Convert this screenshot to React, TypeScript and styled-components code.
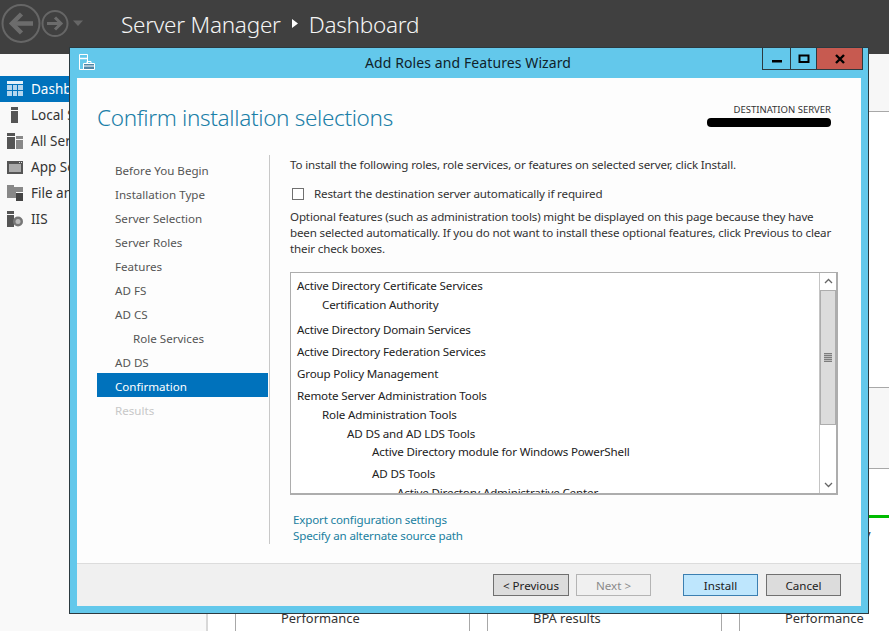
import React from "react";
import styled, { createGlobalStyle } from "styled-components";

const Global = createGlobalStyle`
  html, body { margin: 0; padding: 0; width: 889px; height: 631px; overflow: hidden; background: #fff; }
  * { box-sizing: border-box; }
  body { font-family: "Noto Sans", "Open Sans", sans-serif; font-size: 11.6px; color: #222; }
`;

const Page = styled.div`
  position: relative;
  width: 889px;
  height: 631px;
  overflow: hidden;
  display: flex;
  flex-direction: column;
`;

const Header = styled.header`
  height: 54px;
  flex: none;
  background: #404040;
  display: flex;
  align-items: center;
  color: #f4f4f4;
  font-size: 22.5px;
  letter-spacing: -0.25px;
  padding-bottom: 5px;
`;
const NavIcons = styled.svg`
  width: 121px;
  height: 46px;
  flex: none;
`;
const Crumb = styled.span`
  font-weight: 300;
`;
const CrumbArrow = styled.svg`
  width: 6px;
  height: 9px;
  margin: 0 11px 3px 11px;
`;

const Body = styled.div`
  flex: 1;
  min-height: 0;
  display: flex;
`;
const Sidebar = styled.nav`
  width: 208px;
  flex: none;
  background: #f9f9f9;
  border-right: 2px solid #d8d8d8;
  padding-top: 22px;
`;
const SideItem = styled.div<{ $active?: boolean }>`
  height: 26px;
  display: flex;
  align-items: center;
  gap: 8px;
  padding-left: 7px;
  font-size: 13.5px;
  white-space: nowrap;
  color: ${(p) => (p.$active ? "#fff" : "#333")};
  background: ${(p) => (p.$active ? "#0072bc" : "transparent")};
`;
const SideIcon = styled.svg`
  width: 16px;
  height: 16px;
  flex: none;
`;
const Main = styled.main`
  flex: 1;
  min-width: 0;
  display: flex;
  flex-direction: column;
  background: #fff;
`;
const WelcomeBand = styled.div`
  height: 58px;
  flex: none;
  background: #f7f7f7;
  border-bottom: 1px solid #a8a8a8;
`;
const QuickStart = styled.div`
  height: 276px;
  flex: none;
  border-bottom: 1px solid #a8a8a8;
`;
const RolesBand = styled.div`
  height: 81px;
  flex: none;
  background: #f7f7f7;
  border-bottom: 1px solid #a8a8a8;
`;
const Tiles = styled.div`
  flex: 1;
  display: flex;
  gap: 17px;
  padding-left: 27px;
`;
const Tile = styled.div`
  width: 235px;
  flex: none;
  border-left: 1px solid #a8a8a8;
  border-right: 1px solid #a8a8a8;
  padding: 46px 0 0 45px;
`;
const TileBar = styled.div`
  height: 3px;
  width: 233px;
  margin-left: -45px;
  background: #00bb00;
  margin-bottom: 6px;
`;
const TileRow = styled.div`
  height: 21px;
  line-height: 21px;
  font-size: 12.9px;
  white-space: nowrap;
  color: #333;
`;

const Dialog = styled.section`
  position: absolute;
  left: 69px;
  top: 47px;
  width: 800px;
  height: 567px;
  background: #63c8eb;
  border: 1px solid #2c3a40;
  display: flex;
  flex-direction: column;
  padding: 0 7px 7px 7px;
`;
const TitleBar = styled.div`
  position: relative;
  height: 30px;
  flex: none;
  display: flex;
  align-items: center;
  justify-content: center;
  font-size: 14px;
  letter-spacing: 0.1px;
  color: #10222a;
  padding: 0 2px 1px 0;
`;
const AppIcon = styled.svg`
  position: absolute;
  left: 2px;
  top: 6px;
  width: 16px;
  height: 16px;
`;
const WinButtons = styled.div`
  position: absolute;
  right: -2px;
  top: 0;
  height: 22px;
  display: flex;
  border: 1px solid #2c3a40;
  border-top: 0;
`;
const WinButton = styled.div<{ $w: number; $close?: boolean }>`
  width: ${(p) => p.$w}px;
  background: ${(p) => (p.$close ? "#c75a50" : "transparent")};
  display: flex;
  align-items: center;
  justify-content: center;
  & + & { border-left: 1px solid #2c3a40; }
`;
const WinGlyph = styled.svg`
  width: 14px;
  height: 12px;
`;

const Panel = styled.div`
  flex: 1;
  min-height: 0;
  background: #fdfdfd;
  display: flex;
  flex-direction: column;
`;
const PanelTop = styled.div`
  height: 77px;
  flex: none;
  display: flex;
  justify-content: space-between;
  padding: 25px 30px 0 20px;
`;
const Heading = styled.h1`
  margin: 0;
  font-size: 22.5px;
  line-height: 30px;
  font-weight: 300;
  color: #1b80a8;
  letter-spacing: -0.33px;
`;
const Dest = styled.div`
  display: flex;
  flex-direction: column;
  align-items: flex-end;
`;
const DestLabel = styled.div`
  font-size: 9.5px;
  line-height: 14px;
  color: #333;
`;
const Redaction = styled.div`
  width: 124px;
  height: 9px;
  margin-top: 1px;
  border-radius: 4px;
  background: #000;
`;
const Columns = styled.div`
  height: 389px;
  flex: none;
  display: flex;
  padding: 0 0 0 20px;
`;
const Steps = styled.div`
  width: 173px;
  flex: none;
  border-right: 1px solid #c8c8c8;
  padding: 2px 1px 0 0;
`;
const Step = styled.div<{ $indent?: boolean; $active?: boolean; $off?: boolean }>`
  height: 24px;
  line-height: 27px;
  padding-left: ${(p) => (p.$indent ? 36 : 18)}px;
  color: ${(p) => (p.$active ? "#fff" : p.$off ? "#c8c8c8" : "#555")};
  background: ${(p) => (p.$active ? "#0072bc" : "transparent")};
`;
const Content = styled.div`
  flex: 1;
  min-width: 0;
  padding: 2px 23px 0 20px;
  display: flex;
  flex-direction: column;
  letter-spacing: -0.16px;
`;
const Text = styled.p`
  margin: 0;
  line-height: 16px;
  color: #333;
`;
const CheckRow = styled.label`
  display: flex;
  align-items: center;
  height: 16px;
  margin: 13px 0 7px 2px;
  gap: 10px;
  color: #333;
`;
const Check = styled.span`
  width: 12px;
  height: 12px;
  border: 1px solid #707070;
  background: #fff;
  flex: none;
`;
const ListBox = styled.div`
  height: 224px;
  margin-top: 15px;
  border: 1px solid #adadad;
  border-width: 1px 2px 2px 1px;
  background: #fff;
  display: flex;
  overflow: hidden;
`;
const ListBody = styled.div`
  flex: 1;
  min-width: 0;
  padding: 3px 0 0 6px;
  overflow: hidden;
`;
const ListRow = styled.div<{ $level: number; $mt: number }>`
  line-height: 19px;
  height: 19px;
  white-space: nowrap;
  color: #222;
  margin-left: ${(p) => p.$level * 25}px;
  margin-top: ${(p) => p.$mt}px;
`;
const Scroll = styled.div`
  width: 17px;
  flex: none;
  border-left: 1px solid #c4c4c4;
  display: flex;
  flex-direction: column;
`;
const ScrollBtn = styled.div`
  height: 17px;
  flex: none;
  display: flex;
  align-items: center;
  justify-content: center;
  background: #fff;
`;
const Chevron = styled.svg`
  width: 9px;
  height: 6px;
`;
const Thumb = styled.div`
  height: 135px;
  flex: none;
  background: #dcdcdc;
  border: 1px solid #adadad;
  display: flex;
  align-items: center;
  justify-content: center;
`;
const Grip = styled.div`
  width: 8px;
  height: 9px;
  background: repeating-linear-gradient(#7d7d7d 0 1px, #bdbdbd 1px 2px);
`;
const ScrollTrack = styled.div`
  flex: 1;
  background: #fff;
`;
const Links = styled.div`
  margin: 17px 0 0 3px;
  display: flex;
  flex-direction: column;
`;
const LinkA = styled.a`
  line-height: 16px;
  color: #1a7fa0;
`;
const Footer = styled.div`
  flex: 1;
  margin-top: 19px;
  background: #f0f0f0;
  border-top: 1px solid #dcdcdc;
  display: flex;
  align-items: center;
  padding: 0 20px 0 416px;
`;
const Btn = styled.div<{ $kind?: "off" | "primary"; $w: number; $ml: number }>`
  width: ${(p) => p.$w}px;
  margin-left: ${(p) => p.$ml}px;
  height: 22px;
  display: flex;
  align-items: center;
  justify-content: center;
  border: 1px solid ${(p) => (p.$kind === "off" ? "#b4b4b4" : p.$kind === "primary" ? "#3c7fb1" : "#707070")};
  background: ${(p) => (p.$kind === "off" ? "#f0f0f0" : p.$kind === "primary" ? "#bee6fd" : "#dcdcdc")};
  color: ${(p) => (p.$kind === "off" ? "#8a8a8a" : "#222")};
`;

const steps: { t: string; indent?: boolean; active?: boolean; off?: boolean }[] = [
  { t: "Before You Begin" },
  { t: "Installation Type" },
  { t: "Server Selection" },
  { t: "Server Roles" },
  { t: "Features" },
  { t: "AD FS" },
  { t: "AD CS" },
  { t: "Role Services", indent: true },
  { t: "AD DS" },
  { t: "Confirmation", active: true },
  { t: "Results", off: true },
];

const rows: { t: string; l: number; m: number }[] = [
  { t: "Active Directory Certificate Services", l: 0, m: 0 },
  { t: "Certification Authority", l: 1, m: 0 },
  { t: "Active Directory Domain Services", l: 0, m: 6 },
  { t: "Active Directory Federation Services", l: 0, m: 3 },
  { t: "Group Policy Management", l: 0, m: 3 },
  { t: "Remote Server Administration Tools", l: 0, m: 3 },
  { t: "Role Administration Tools", l: 1, m: 0 },
  { t: "AD DS and AD LDS Tools", l: 2, m: 0 },
  { t: "Active Directory module for Windows PowerShell", l: 3, m: -1 },
  { t: "AD DS Tools", l: 3, m: 3 },
  { t: "Active Directory Administrative Center", l: 4, m: 0 },
];

export default function App() {
  return (
    <Page>
      <Global />
      <Header>
        <NavIcons viewBox="0 0 121 46">
          <g fill="none" stroke="#666" strokeWidth="2">
            <circle cx="21" cy="21.5" r="18.5" />
            <circle cx="55" cy="21.5" r="12.5" />
          </g>
          <g fill="none" stroke="#6c6c6c" strokeWidth="4.5">
            <path d="M12 21.5H33" />
            <path d="M21.5 12L12 21.5L21.5 31" />
          </g>
          <g fill="none" stroke="#6c6c6c" strokeWidth="3">
            <path d="M47 21.5H60" />
            <path d="M55 15.5L61 21.5L55 27.5" />
          </g>
          <path d="M73 18.5H83L78 24Z" fill="#666" />
        </NavIcons>
        <Crumb>Server Manager</Crumb>
        <CrumbArrow viewBox="0 0 6 9"><path d="M0 0 L6 4.5 L0 9 Z" fill="#fff" /></CrumbArrow>
        <Crumb>Dashboard</Crumb>
      </Header>
      <Body>
        <Sidebar>
          <SideItem $active>
            <SideIcon viewBox="0 0 16 16"><path d="M0 0H16V3H0Z" fill="#e4f1fa" /><path d="M0 4H5V9H0Z M6 4H10V9H6Z M11 4H16V9H11Z M0 10H5V15H0Z M6 10H10V15H6Z M11 10H16V15H11Z" fill="#b5d6ee" /></SideIcon>
            Dashboard
          </SideItem>
          <SideItem>
            <SideIcon viewBox="0 0 16 16"><path d="M4 0H11V3H4Z M4 4H11V16H4Z" fill="#555" /></SideIcon>
            Local Server
          </SideItem>
          <SideItem>
            <SideIcon viewBox="0 0 16 16"><path d="M0 0H8V3H0Z M0 4H8V16H0Z" fill="#555" /><path d="M9 3H16V6H9Z M9 7H16V16H9Z" fill="#888" /></SideIcon>
            All Servers
          </SideItem>
          <SideItem>
            <SideIcon viewBox="0 0 16 16"><path d="M0 2H16V15H0Z" fill="#555" /><path d="M2 5H14V13H2Z" fill="#aaa" /><path d="M12 3H13V4H12Z M14 3H15V4H14Z" fill="#ddd" /></SideIcon>
            App Server
          </SideItem>
          <SideItem>
            <SideIcon viewBox="0 0 16 16"><path d="M0 0H7V2H16V7H9V13H0Z" fill="#888" /><path d="M9 8H16V16H9Z" fill="#444" /></SideIcon>
            File and Storage Services
          </SideItem>
          <SideItem>
            <SideIcon viewBox="0 0 16 16"><path d="M0 0H7V3H0Z M0 4H7V16H0Z" fill="#555" /><circle cx="11" cy="10.5" r="5" fill="#777" /><circle cx="11" cy="10.5" r="2.5" fill="#bbb" /></SideIcon>
            IIS
          </SideItem>
        </Sidebar>
        <Main>
          <WelcomeBand />
          <QuickStart />
          <RolesBand />
          <Tiles>
            <Tile>
              <TileBar />
              <TileRow>Manageability</TileRow>
              <TileRow>Events</TileRow>
              <TileRow>Services</TileRow>
              <TileRow>Configuration</TileRow>
              <TileRow>Performance</TileRow>
            </Tile>
            <Tile>
              <TileBar />
              <TileRow>Manageability</TileRow>
              <TileRow>Events</TileRow>
              <TileRow>Services</TileRow>
              <TileRow>Performance</TileRow>
              <TileRow>BPA results</TileRow>
            </Tile>
            <Tile>
              <TileBar />
              <TileRow>Manageability</TileRow>
              <TileRow>Events</TileRow>
              <TileRow>Services</TileRow>
              <TileRow>Configuration</TileRow>
              <TileRow>Performance</TileRow>
            </Tile>
          </Tiles>
        </Main>
      </Body>
      <Dialog>
        <TitleBar>
          <AppIcon viewBox="0 0 16 16">
            <g fill="none" stroke="#fff" strokeWidth="1">
              <path d="M0.5 0.5H8.5V15.5H0.5Z" />
              <path d="M0.5 4.5H8.5" strokeWidth="1.5" />
              <path d="M4.5 9.5H15.5V15.5H4.5Z" fill="#4f86a6" />
              <path d="M8 9V7.5H12V9" />
              <path d="M4.5 12H15.5" />
            </g>
          </AppIcon>
          Add Roles and Features Wizard
          <WinButtons>
            <WinButton $w={27}><WinGlyph viewBox="0 0 14 12"><path d="M2 7H12V9.5H2Z" fill="#000" /></WinGlyph></WinButton>
            <WinButton $w={26}><WinGlyph viewBox="0 0 14 12"><path d="M2.5 2.5H11.5V9H2.5Z" fill="none" stroke="#000" strokeWidth="2" /></WinGlyph></WinButton>
            <WinButton $w={46} $close><WinGlyph viewBox="0 0 14 12"><path d="M3 2L11 10M11 2L3 10" stroke="#000" strokeWidth="2.4" /></WinGlyph></WinButton>
          </WinButtons>
        </TitleBar>
        <Panel>
          <PanelTop>
            <Heading>Confirm installation selections</Heading>
            <Dest>
              <DestLabel>DESTINATION SERVER</DestLabel>
              <Redaction />
            </Dest>
          </PanelTop>
          <Columns>
            <Steps>
              {steps.map((s) => (
                <Step key={s.t} $indent={s.indent} $active={s.active} $off={s.off}>{s.t}</Step>
              ))}
            </Steps>
            <Content>
              <Text>To install the following roles, role services, or features on selected server, click Install.</Text>
              <CheckRow><Check />Restart the destination server automatically if required</CheckRow>
              <Text>Optional features (such as administration tools) might be displayed on this page because they have been selected automatically. If you do not want to install these optional features, click Previous to clear their check boxes.</Text>
              <ListBox>
                <ListBody>
                  {rows.map((r) => (
                    <ListRow key={r.t} $level={r.l} $mt={r.m}>{r.t}</ListRow>
                  ))}
                </ListBody>
                <Scroll>
                  <ScrollBtn><Chevron viewBox="0 0 9 6"><path d="M1 5L4.5 1.5L8 5" fill="none" stroke="#666" strokeWidth="1.3" /></Chevron></ScrollBtn>
                  <Thumb><Grip /></Thumb>
                  <ScrollTrack />
                  <ScrollBtn><Chevron viewBox="0 0 9 6"><path d="M1 1L4.5 4.5L8 1" fill="none" stroke="#666" strokeWidth="1.3" /></Chevron></ScrollBtn>
                </Scroll>
              </ListBox>
              <Links>
                <LinkA>Export configuration settings</LinkA>
                <LinkA>Specify an alternate source path</LinkA>
              </Links>
            </Content>
          </Columns>
          <Footer>
            <Btn $w={76} $ml={0}>&lt; Previous</Btn>
            <Btn $w={75} $ml={7} $kind="off">Next &gt;</Btn>
            <Btn $w={75} $ml={32} $kind="primary">Install</Btn>
            <Btn $w={75} $ml={8}>Cancel</Btn>
          </Footer>
        </Panel>
      </Dialog>
    </Page>
  );
}
